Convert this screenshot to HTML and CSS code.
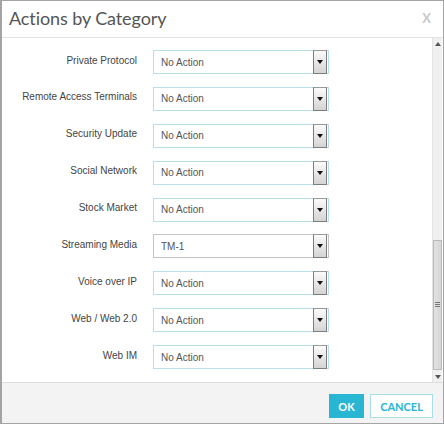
FILE: index.html
```html
<!DOCTYPE html>
<html>
<head>
<meta charset="utf-8">
<link rel="stylesheet" href="styles.css">
</head>
<body>
<div class="dialog">
  <div class="header">
    <div class="title">Actions by Category</div>
    <div class="close">X</div>
  </div>
  <div class="body">
    <div class="content">
      <div class="row"><div class="label">Private Protocol</div><div class="select"><span class="val">No Action</span><span class="arrow"><i></i></span></div></div>
      <div class="row"><div class="label">Remote Access Terminals</div><div class="select"><span class="val">No Action</span><span class="arrow"><i></i></span></div></div>
      <div class="row"><div class="label">Security Update</div><div class="select"><span class="val">No Action</span><span class="arrow"><i></i></span></div></div>
      <div class="row"><div class="label">Social Network</div><div class="select"><span class="val">No Action</span><span class="arrow"><i></i></span></div></div>
      <div class="row"><div class="label">Stock Market</div><div class="select"><span class="val">No Action</span><span class="arrow"><i></i></span></div></div>
      <div class="row"><div class="label">Streaming Media</div><div class="select gray"><span class="val">TM-1</span><span class="arrow"><i></i></span></div></div>
      <div class="row"><div class="label">Voice over IP</div><div class="select"><span class="val">No Action</span><span class="arrow"><i></i></span></div></div>
      <div class="row"><div class="label">Web / Web 2.0</div><div class="select"><span class="val">No Action</span><span class="arrow"><i></i></span></div></div>
      <div class="row"><div class="label">Web IM</div><div class="select"><span class="val">No Action</span><span class="arrow"><i></i></span></div></div>
    </div>
    <div class="scrollbar">
      <div class="sb-btn"><i class="up"></i></div>
      <div class="sb-track">
        <div class="sb-thumb"><span class="grip"></span></div>
      </div>
      <div class="sb-btn"><i class="down"></i></div>
    </div>
  </div>
  <div class="footer">
    <button class="btn ok">OK</button>
    <button class="btn cancel">CANCEL</button>
  </div>
</div>
</body>
</html>
```

FILE: styles.css
```css
* { box-sizing: border-box; }
html, body { margin: 0; padding: 0; background: #fff; }
body { font-family: "Liberation Sans", Arial, sans-serif; }

.dialog {
  width: 444px;
  height: 424px;
  border: 1px solid #a4a4a4;
  border-left-width: 2px;
  display: flex;
  flex-direction: column;
  background: #fff;
}

.header {
  height: 37px;
  border-bottom: 1px solid #e3e3e3;
  display: flex;
  align-items: center;
  justify-content: space-between;
  padding: 0 12px 2px 7px;
  flex-shrink: 0;
}
.title {
  font-family: "Lato", "Open Sans", sans-serif;
  font-size: 18px;
  font-weight: 400;
  color: #555;
  letter-spacing: -0.1px;
}
.close {
  font-family: "Lato", sans-serif;
  font-weight: 700;
  font-size: 13px;
  color: #c8c8c8;
}

.body {
  height: 344px;
  display: flex;
  flex-shrink: 0;
  overflow: hidden;
}
.content {
  flex: 1;
  padding-top: 12px;
}
.row {
  display: flex;
  align-items: center;
  height: 24px;
  margin-bottom: 12.875px;
}
.label {
  width: 135px;
  text-align: right;
  font-size: 10px;
  color: #444;
  margin-right: 16px;
  position: relative;
  top: -2px;
}
.select {
  width: 176px;
  height: 24px;
  border: 1px solid #b9e0e6;
  display: flex;
  align-items: center;
  justify-content: space-between;
  background: #fff;
}
.select.gray { border-color: #c4c4c4; }
.val {
  font-size: 10px;
  color: #555;
  padding-left: 7px;
}
.arrow {
  width: 14px;
  height: 24px;
  margin-right: 1px;
  border: 1px solid #7d7d7d;
  border-top-color: #9a9a9a;
  background: linear-gradient(#fbfbfb, #d4d4d4);
  display: flex;
  align-items: center;
  justify-content: center;
}
.arrow i {
  width: 0; height: 0;
  border-left: 3.5px solid transparent;
  border-right: 3.5px solid transparent;
  border-top: 4px solid #111;
}

.scrollbar {
  width: 10px;
  margin-right: 1px;
  display: flex;
  flex-direction: column;
  background: #f0f0f0;
  border-left: 1px solid #e4e4e4;
}
.sb-btn {
  height: 11px;
  display: flex;
  align-items: center;
  justify-content: center;
}
.sb-btn i { width: 0; height: 0; border-left: 3px solid transparent; border-right: 3px solid transparent; }
.sb-btn i.up { border-bottom: 4px solid #555; }
.sb-btn i.down { border-top: 4px solid #555; }
.sb-track {
  flex: 1;
  display: flex;
  flex-direction: column;
  justify-content: flex-end;
  padding-bottom: 1px;
}
.sb-thumb {
  height: 130px;
  background: linear-gradient(90deg, #e2e2e2, #d6d6d6);
  border: 1px solid #b9b9b9;
  display: flex;
  align-items: center;
  justify-content: center;
}
.grip {
  width: 5px;
  height: 6px;
  background: repeating-linear-gradient(#777 0 1px, transparent 1px 2px);
}

.footer {
  flex: 1;
  border-top: 1px solid #dedede;
  background: #f3f3f3;
  display: flex;
  justify-content: flex-end;
  align-items: flex-start;
  padding: 11px 10px 0 0;
}
.btn {
  height: 24px;
  font-family: "Lato", "Open Sans", sans-serif;
  font-weight: 700;
  font-size: 11px;
  padding: 0;
  cursor: pointer;
}
.ok {
  width: 35px;
  background: #29b6d3;
  border: 1px solid #29b6d3;
  color: #fff;
}
.cancel {
  width: 63px;
  margin-left: 6px;
  background: #fff;
  border: 1px solid #a9dde8;
  color: #29b6d3;
}
```
